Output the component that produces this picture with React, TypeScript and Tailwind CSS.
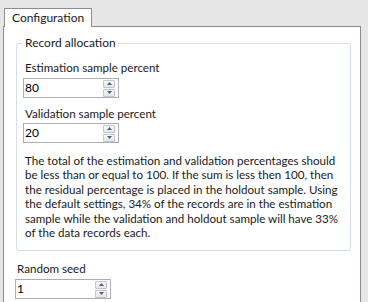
import React from "react";

function Spinner({ value }: { value: string }) {
  return (
    <div className="flex h-[20px] w-[96px] items-center border border-[#abadb3] bg-white pr-[3px]">
      <span className="flex-1 pl-[1px] text-[12px] leading-none text-black">{value}</span>
      <div className="flex flex-col gap-[1px]">
        <div className="flex h-[8px] w-[12px] items-center justify-center rounded-[1px] border border-[#c3c6cc] bg-gradient-to-b from-[#f7f7f7] to-[#e3e5e8]">
          <svg width="5" height="3" viewBox="0 0 5 3">
            <polygon points="2.5,0 5,3 0,3" fill="#4a5f8a" />
          </svg>
        </div>
        <div className="flex h-[8px] w-[12px] items-center justify-center rounded-[1px] border border-[#c3c6cc] bg-gradient-to-b from-[#f7f7f7] to-[#e3e5e8]">
          <svg width="5" height="3" viewBox="0 0 5 3">
            <polygon points="0,0 5,0 2.5,3" fill="#4a5f8a" />
          </svg>
        </div>
      </div>
    </div>
  );
}

export default function App() {
  const lines = [
    "The total of the estimation and validation percentages should",
    "be less than or equal to 100. If the sum is less then 100, then",
    "the residual percentage is placed in the holdout sample. Using",
    "the default settings, 34% of the records are in the estimation",
    "sample while the validation and holdout sample will have 33%",
    "of the data records each.",
  ];
  return (
    <div
      className="flex h-[302px] w-[368px] flex-col overflow-hidden bg-[#e6e6e6] pl-[3px] pr-[7px] pt-[8px] text-[11.6px] text-[#1a1a1a]"
      style={{ fontFamily: 'Lato, "Noto Sans", sans-serif' }}
    >
      <div className="relative z-10 -mb-[1px] ml-[1px] flex h-[19px] w-[88px] items-center border border-b-0 border-[#898c95] bg-white pl-[7px]">
        <span className="text-[12px] leading-none">Configuration</span>
      </div>
      <div className="flex flex-1 flex-col border border-b-0 border-[#898c95] bg-white pl-[12px] pt-[16px]">
        <div className="relative flex h-[208px] w-[335px] flex-col rounded-[3px] border border-[#d5dfe5] pl-[6px] pt-[16px]">
          <span className="absolute left-[6px] top-[-9px] bg-white px-[2px] text-[12px] leading-[16px]">Record allocation</span>
          <div className="pl-[2px] leading-[16px]">Estimation sample percent</div>
          <div className="mt-[2px]">
            <Spinner value="80" />
          </div>
          <div className="mt-[8px] pl-[2px] leading-[16px]">Validation sample percent</div>
          <div className="mt-[1px]">
            <Spinner value="20" />
          </div>
          <div className="mt-[11px] pl-[2px] leading-[14.4px]">
            {lines.map((l, i) => (
              <div key={i} className="whitespace-nowrap">
                {l}
              </div>
            ))}
          </div>
        </div>
        <div className="mt-[10px] pl-[1px] leading-[16px]">Random seed</div>
        <div className="-ml-[1px] mt-[2px]">
          <Spinner value="1" />
        </div>
      </div>
    </div>
  );
}
